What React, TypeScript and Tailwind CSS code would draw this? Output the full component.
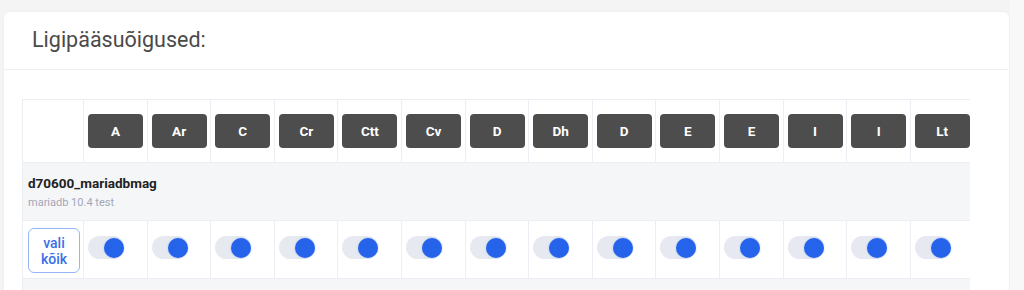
const columns = ["A", "Ar", "C", "Cr", "Ctt", "Cv", "D", "Dh", "D", "E", "E", "I", "I", "Lt"];

const Toggle = () => {
  return (
    <div className="relative h-[23px] w-[36px] rounded-full bg-[#e6e9f0]">
      <span className="absolute right-0 top-[1.5px] h-[20px] w-[20px] rounded-full bg-[#2563eb] shadow-[0_0_2px_rgba(37,99,235,0.35)]" />
    </div>
  );
};

const App = () => {
  return (
    <div
      className="flex h-[290px] w-full overflow-hidden bg-[#f4f4f4]"
      style={{ fontFamily: "Roboto, 'Liberation Sans', sans-serif" }}
    >
      <div className="flex-1 pt-[12px] pl-[4px] pr-[1px]">
        <div className="h-[300px] rounded-t-[6px] bg-white shadow-[0_0_3px_rgba(0,0,0,0.04)]">
          <div className="flex h-[58px] items-center border-b border-[#efeff1] px-[28px]">
            <h2 className="text-[21.5px] font-normal text-[#4a4a4a]">Ligipääsuõigused:</h2>
          </div>
          <div className="pt-[29px] pl-[18px]">
            <div className="w-[948px] overflow-hidden">
              <div className="grid w-max grid-cols-[61px_repeat(14,63.6px)] border-t border-l border-[#eceef3]">
                <div className="h-[63px] border-r border-b border-[#eceef3]" />
                {columns.map((c, i) => (
                  <div
                    key={i}
                    className="flex h-[63px] items-center border-r border-b border-[#eceef3] pl-[4px]"
                  >
                    <span className="flex h-[34px] w-[55px] items-center justify-center rounded-[4px] bg-[#4d4d4d] text-[13.5px] font-bold text-white">
                      {c}
                    </span>
                  </div>
                ))}

                <div className="col-span-15 flex h-[58px] flex-col justify-center border-b border-[#eceef3] bg-[#f5f6f8] pl-[5px]">
                  <div className="text-[13.5px] font-bold leading-[18px] text-[#222]">d70600_mariadbmag</div>
                  <div className="mt-[4px] text-[11px] leading-[14px] text-[#a3a7b7]">mariadb 10.4 test</div>
                </div>

                <div className="flex h-[58px] items-center border-r border-b border-[#eceef3] pl-[5px] pt-[2px]">
                  <button className="flex h-[45px] w-[52px] flex-col items-center justify-center rounded-[6px] border border-[#96b6f6] bg-white text-[14px] font-medium leading-[16px] text-[#3a6fe6]">
                    <span>vali</span>
                    <span>kõik</span>
                  </button>
                </div>
                {columns.map((_, i) => (
                  <div
                    key={i}
                    className="flex h-[58px] items-center border-r border-b border-[#eceef3] pl-[4px] pb-[4px]"
                  >
                    <Toggle />
                  </div>
                ))}

                <div className="col-span-15 h-[40px] bg-[#f5f6f8]" />
              </div>
            </div>
          </div>
        </div>
      </div>
      <div className="w-[14px] bg-[#f8f8f9]" />
    </div>
  );
};

export default App;
